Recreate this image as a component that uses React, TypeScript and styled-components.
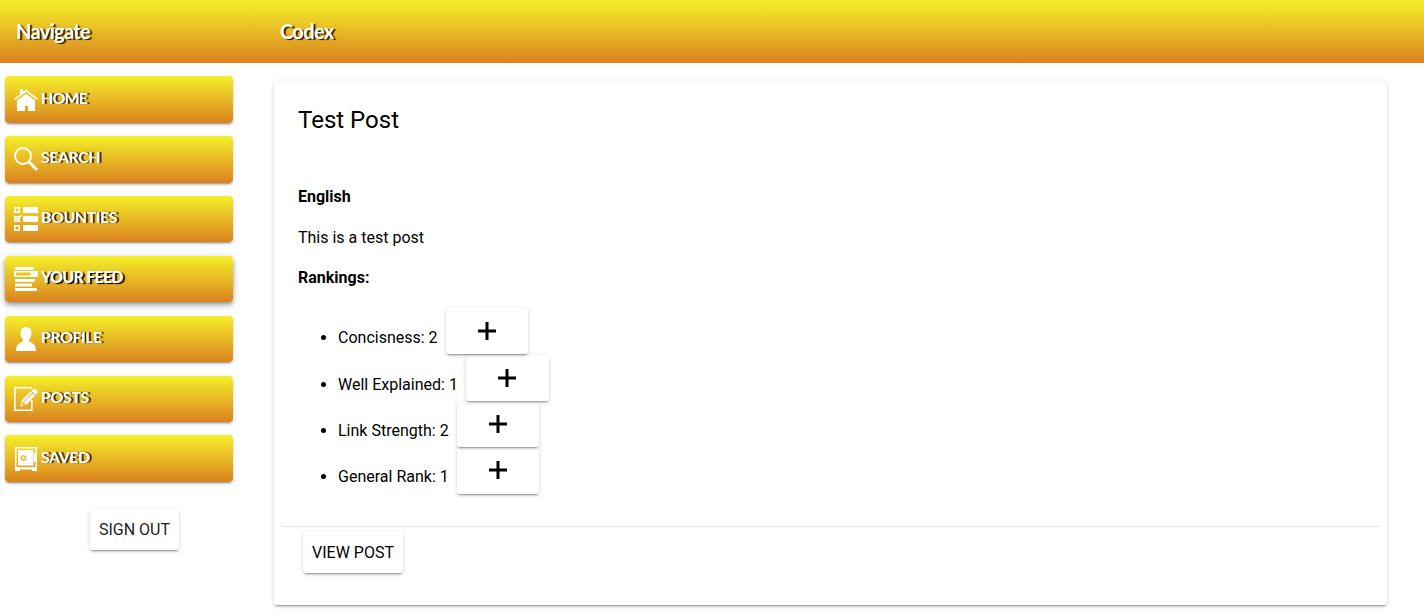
import React from 'react';
import styled, { createGlobalStyle } from 'styled-components';

const GlobalStyle = createGlobalStyle`
  * { box-sizing: border-box; }
  body { margin: 0; background: #fff; color: #000; font-family: Roboto, sans-serif; font-size: 16px; }
`;

const gold = 'linear-gradient(#f5f02a, #da821f)';
const raised = '0 3px 1px -2px rgba(0,0,0,.2), 0 2px 2px 0 rgba(0,0,0,.14), 0 1px 5px 0 rgba(0,0,0,.12)';
const lifted = '0 2px 4px -1px rgba(0,0,0,.3), 0 4px 5px 0 rgba(0,0,0,.16), 0 1px 10px 0 rgba(0,0,0,.14)';

const Page = styled.div`
  min-height: 616px;
`;
const Header = styled.header`
  display: flex;
  height: 63px;
  padding-left: 16px;
  background: ${gold};
`;
const HeaderTitle = styled.div<{ $width: number; $track: number }>`
  width: ${p => p.$width}px;
  font: 700 20px/62px Lato, sans-serif;
  letter-spacing: ${p => p.$track}px;
  color: #fff;
  text-shadow: 2px 1px 1px rgba(0,0,0,.85);
`;
const Body = styled.div`
  display: flex;
  align-items: flex-start;
`;
const Sidebar = styled.nav`
  display: flex;
  flex-direction: column;
  width: 274px;
  padding: 13px 0 0 5px;
`;
const NavButton = styled.button<{ $height: number; $gap: number; $drop: number; $active?: boolean }>`
  display: flex;
  align-items: flex-start;
  gap: 3px;
  width: 228px;
  height: ${p => p.$height}px;
  margin: 0 0 ${p => p.$gap}px;
  padding: ${p => p.$drop}px 0 0 9px;
  border: 0;
  border-radius: 4px;
  background: ${gold};
  color: #fff;
  box-shadow: ${p => (p.$active ? lifted : raised)};
`;
const NavIcon = styled.svg`
  width: 24px;
  height: 24px;
  flex: none;
`;
const NavLabel = styled.span<{ $track: number; $line: number; $active?: boolean }>`
  font: ${p => (p.$active ? 900 : 700)} 16px/${p => p.$line}px Lato, sans-serif;
  letter-spacing: ${p => p.$track}px;
  text-shadow: ${p => (p.$active ? '2px 1px 1px #000' : '2px 0 1px rgba(0,0,0,.85)')};
`;
const RaisedButton = styled.button`
  height: 41px;
  padding: 0;
  border: 0;
  border-radius: 3px;
  background: #fff;
  color: #000;
  font: 400 16px/41px Roboto, sans-serif;
  box-shadow: ${raised};
`;
const SignOut = styled(RaisedButton)`
  width: 89px;
  margin: 27px 0 0 85px;
  color: #222;
`;
const ViewPost = styled(RaisedButton)`
  width: 100px;
  margin: 5px 0 0 21px;
`;
const Card = styled.main`
  width: 1113px;
  height: 524px;
  margin-top: 18px;
  padding: 0 8px;
  border-radius: 3px;
  background: #fff;
  box-shadow: ${raised};
`;
const Content = styled.section`
  height: 445px;
  padding: 24px 16px 0;
`;
const Title = styled.h1`
  margin: 0 0 49px;
  font: 400 24px/31px Roboto, sans-serif;
`;
const Text = styled.p<{ $strong?: boolean }>`
  margin: 0 0 16px;
  font-weight: ${p => (p.$strong ? 700 : 400)};
  line-height: 24.5px;
`;
const Rankings = styled.ul`
  margin: 17px 0 0;
  padding: 0 0 0 40px;
`;
const Ranking = styled.li<{ $height: number; $layer: number }>`
  position: relative;
  z-index: ${p => p.$layer};
  height: ${p => p.$height}px;
  line-height: 60px;
`;
const RankRow = styled.div`
  display: flex;
  align-items: flex-start;
`;
const RankLabel = styled.span<{ $width: number }>`
  width: ${p => p.$width}px;
  white-space: nowrap;
`;
const PlusButton = styled(RaisedButton)<{ $width: number; $height: number }>`
  display: flex;
  width: ${p => p.$width}px;
  height: ${p => p.$height}px;
  padding: 14px 0 0 32px;
`;
const Divider = styled.hr`
  height: 1px;
  margin: 0;
  border: 0;
  background: #e4e4e4;
`;

const icons: Record<string, React.ReactNode> = {
  HOME: (
    <>
      <path d="M6 2h3v4L6 8.500z" fill="#fff" />
      <path d="M.7 12.400L12 3.600l11.300 8.800" fill="none" stroke="#fff" strokeWidth="1.6" />
      <path d="M3 13.500l9-7 9 7V24h-7v-5h-3v5H3z" fill="#fff" />
    </>
  ),
  SEARCH: (
    <g fill="none" stroke="#fff">
      <circle cx="9" cy="9" r="8" strokeWidth="2" />
      <path d="M14.6 14.6l8.4 8.4" strokeWidth="2.8" />
    </g>
  ),
  BOUNTIES: (
    <>
      <path d="M9 0h15v6H9zM9 9h15v6H9zM9 18h15v6H9z" fill="#fff" />
      <path d="M.8.8h4.400v4.400H.8zM.8 9.800h4.400v4.400H.8zM.8 18.800h4.400v4.400H.8z" fill="none" stroke="#fff" strokeWidth="1.6" />
      <path d="M1.500 11l2 1.800L7.500 8" fill="none" stroke="#fff" strokeWidth="1.4" />
    </>
  ),
  'YOUR FEED': (
    <path
      fill="#fff"
      fillRule="evenodd"
      d="M1 0h18.500v3H1zM0 4h24v6H0zM2 5.500v3h14.500v-3zM1 12h20v3H1zM1 16.500h17v3H1zM1 21h22v3H1z"
    />
  ),
  PROFILE: (
    <path
      fill="#fff"
      d="M12 0c3.600 0 5.500 2.400 5.500 6.200 0 2.300-.8 4.400-2.300 5.900v2.200c1 1.200 6.800 1.400 6.800 9.700H2c0-8.300 5.800-8.500 6.800-9.700v-2.200C7.300 10.600 6.500 8.500 6.500 6.200 6.500 2.400 8.400 0 12 0z"
    />
  ),
  POSTS: (
    <>
      <path d="M18 .8H.8v22.400h17V13" fill="none" stroke="#fff" strokeWidth="1.6" />
      <path d="M6 20l2-7L19 2.200c2-1.400 5.500 2 4.200 4L13 17.200z" fill="#fff" />
      <path d="M9.800 14.800l8.700-8.700M17.500 4.500l3.500 3.500M8.200 17.800l.8-2.600 1.900 1.900z" fill="none" stroke="#e2a327" strokeWidth="1" />
    </>
  ),
  SAVED: (
    <>
      <path
        fill="#fff"
        fillRule="evenodd"
        d="M1 0h22v24h-5v-1.500H6V24H1zM2.500 1.500v18.700h19v-5.200H20V6h1.500V1.500z"
      />
      <path
        fill="#fff"
        fillRule="evenodd"
        d="M4 3h15.500v15.500H4zM9.500 8a3 3 0 1 0 .01 0zm0 1.500a1.500 1.500 0 1 1-.01 0z"
      />
    </>
  ),
};

const navItems = [
  { label: 'HOME', height: 47, gap: 13, drop: 11, track: -0.9, line: 22 },
  { label: 'SEARCH', height: 47, gap: 13, drop: 11, track: -0.5, line: 20 },
  { label: 'BOUNTIES', height: 46, gap: 14, drop: 11, track: -0.5, line: 20 },
  { label: 'YOUR FEED', height: 46, gap: 14, drop: 11, track: -0.75, line: 20, active: true },
  { label: 'PROFILE', height: 46, gap: 14, drop: 11, track: -0.5, line: 20 },
  { label: 'POSTS', height: 46, gap: 13, drop: 11, track: -0.4, line: 20 },
  { label: 'SAVED', height: 47, gap: 0, drop: 12, track: -0.5, line: 20 },
];

const rankings = [
  { label: 'Concisness', score: 2, labelWidth: 108, width: 82, height: 46, row: 47 },
  { label: 'Well Explained', score: 1, labelWidth: 128, width: 83, height: 46, row: 46 },
  { label: 'Link Strength', score: 2, labelWidth: 119, width: 82, height: 46, row: 46 },
  { label: 'General Rank', score: 1, labelWidth: 119, width: 82, height: 47, row: 46 },
];

export default function App() {
  return (
    <Page>
      <GlobalStyle />
      <Header>
        <HeaderTitle $width={264} $track={-0.65}>Navigate</HeaderTitle>
        <HeaderTitle $width={200} $track={-0.65}>Codex</HeaderTitle>
      </Header>
      <Body>
        <Sidebar>
          {navItems.map(n => (
            <NavButton key={n.label} $height={n.height} $gap={n.gap} $drop={n.drop} $active={n.active}>
              <NavIcon viewBox="0 0 24 24">{icons[n.label]}</NavIcon>
              <NavLabel $track={n.track} $line={n.line} $active={n.active}>{n.label}</NavLabel>
            </NavButton>
          ))}
          <SignOut>SIGN OUT</SignOut>
        </Sidebar>
        <Card>
          <Content>
            <Title>Test Post</Title>
            <Text $strong>English</Text>
            <Text>This is a test post</Text>
            <Text $strong>Rankings:</Text>
            <Rankings>
              {rankings.map((r, i) => (
                <Ranking key={r.label} $height={r.row} $layer={rankings.length - i}>
                  <RankRow>
                    <RankLabel $width={r.labelWidth}>{r.label}: {r.score}</RankLabel>
                    <PlusButton $width={r.width} $height={r.height}>
                      <svg width="18" height="18" viewBox="0 0 18 18">
                        <path d="M9 0v18M0 9h18" stroke="#000" strokeWidth="3" />
                      </svg>
                    </PlusButton>
                  </RankRow>
                </Ranking>
              ))}
            </Rankings>
          </Content>
          <Divider />
          <ViewPost>VIEW POST</ViewPost>
        </Card>
      </Body>
    </Page>
  );
}
